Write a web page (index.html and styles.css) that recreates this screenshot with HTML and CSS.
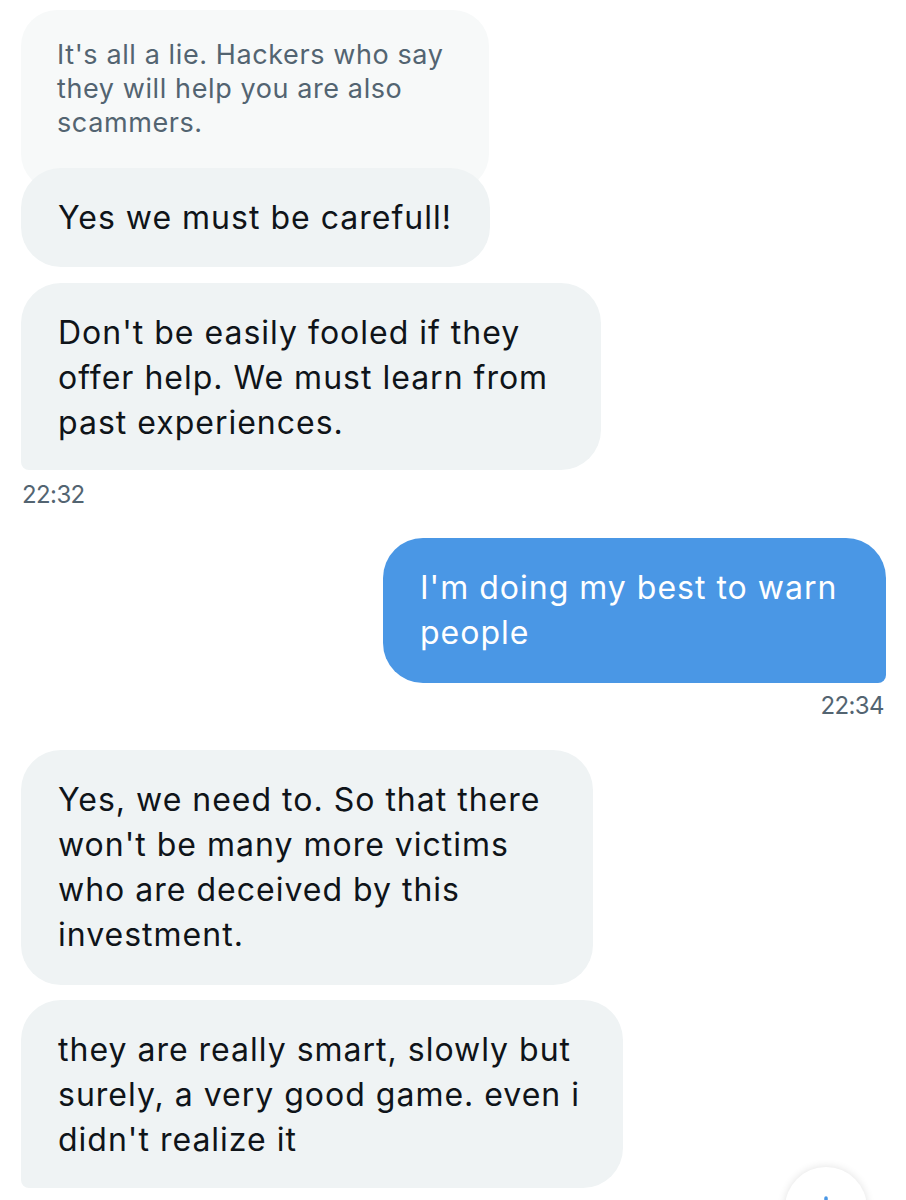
FILE: index.html
```html
<!DOCTYPE html>
<html>
<head>
<meta charset="utf-8">
<link rel="stylesheet" href="styles.css">
</head>
<body>
<div class="chat">
  <div class="msg in quote">It's all a lie. Hackers who say<br>they will help you are also<br>scammers.</div>
  <div class="msg in reply">Yes we must be carefull!</div>
  <div class="msg in last b3">Don't be easily fooled if they<br>offer help. We must learn from<br>past experiences.</div>
  <div class="time left">22:32</div>
  <div class="msg out last">I'm doing my best to warn<br>people</div>
  <div class="time right">22:34</div>
  <div class="msg in b4">Yes, we need to. So that there<br>won't be many more victims<br>who are deceived by this<br>investment.</div>
  <div class="msg in last b5">they are really smart, slowly but<br>surely, a very good game. even i<br>didn't realize it</div>
</div>
<div class="scroll-btn">
  <svg width="40" height="40" viewBox="0 0 40 40"><path d="M20 8 V32 M10 22 L20 32 L30 22" fill="none" stroke="#4a97e5" stroke-width="3.5" stroke-linecap="round" stroke-linejoin="round"/></svg>
</div>
</body>
</html>
```
FILE: styles.css
```css
html, body {
  margin: 0;
  padding: 0;
  background: #ffffff;
}
body {
  width: 906px;
  height: 1200px;
  overflow: hidden;
  position: relative;
  font-family: Inter, "Noto Sans", sans-serif;
}
.chat {
  display: flex;
  flex-direction: column;
  padding: 10px 20px 0 20px;
}
.msg {
  box-sizing: border-box;
  font-size: 32px;
  line-height: 45px;
  color: #0f1419;
  background: #eff3f4;
  border-radius: 40px;
  padding: 27px 10px 27px 38px;
  letter-spacing: 1px;
  white-space: nowrap;
  position: relative;
}
.msg.in {
  align-self: flex-start;
  margin-left: 1px;
}
.msg.in.last {
  border-bottom-left-radius: 8px;
}
.msg.out {
  align-self: flex-end;
  width: 503px;
  background: #4a97e5;
  color: #ffffff;
  margin-top: 30px;
  padding: 27px 10px 28px 37px;
}
.msg.out.last {
  border-bottom-right-radius: 8px;
}
.quote {
  width: 468px;
  height: 180px;
  background: #f7f9f9;
  color: #536471;
  font-size: 27px;
  line-height: 34px;
  padding: 28px 10px 0 36px;
  border-radius: 36px;
  letter-spacing: 0.6px;
}
.reply {
  width: 469px;
  margin-top: -22px;
  padding: 27px 10px 27px 37px;
  z-index: 1;
}
.b3 {
  margin-top: 16px;
  width: 580px;
  padding: 27px 10px 25px 37px;
}
.b4 {
  margin-top: 31px;
  width: 572px;
  padding: 27px 10px 28px 37px;
}
.b5 {
  margin-top: 15px;
  width: 602px;
  padding: 27px 10px 26px 37px;
}
.time {
  font-size: 24px;
  line-height: 26px;
  letter-spacing: -0.6px;
  color: #536471;
}
.time.left {
  align-self: flex-start;
  margin-top: 12px;
  margin-left: 2px;
}
.time.right {
  align-self: flex-end;
  margin-top: 10px;
  margin-right: 2px;
}
.scroll-btn {
  position: absolute;
  left: 785px;
  top: 1167px;
  width: 82px;
  height: 82px;
  border-radius: 50%;
  background: #ffffff;
  box-shadow: 0 0 8px rgba(0, 0, 0, 0.12);
  display: flex;
  justify-content: center;
  align-items: center;
}
.scroll-btn svg {
  margin-top: 4px;
}
```
